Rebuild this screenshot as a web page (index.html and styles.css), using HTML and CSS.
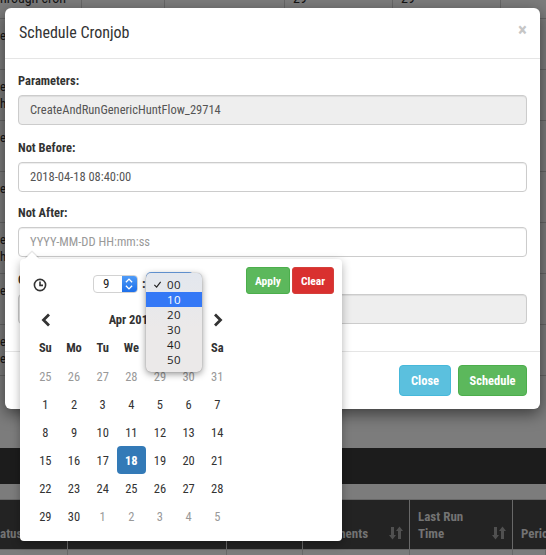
FILE: index.html
```html
<!DOCTYPE html>
<html lang="en">
<head>
<meta charset="utf-8">
<title>Schedule Cronjob</title>
<link rel="stylesheet" href="styles.css">
</head>
<body>
<div class="page">
  <div class="bg-rows">
    <div class="bg-row first"><span class="c c1"><span class="shift">hrough cron</span></span><span class="c c2"></span><span class="c c3"></span><span class="c c4"><span class="shift">29</span></span><span class="c c5"><span class="shift">29</span></span><span class="c c6"></span></div>
    <div class="bg-row"><span class="c c1">e</span><span class="c c2"></span><span class="c c3"></span><span class="c c4"></span><span class="c c5"></span><span class="c c6"></span></div>
    <div class="bg-row"><span class="c c1">e<br>h</span><span class="c c2"></span><span class="c c3"></span><span class="c c4"></span><span class="c c5"></span><span class="c c6"></span></div>
    <div class="bg-row"><span class="c c1">e</span><span class="c c2"></span><span class="c c3"></span><span class="c c4"></span><span class="c c5"></span><span class="c c6"></span></div>
    <div class="bg-row"><span class="c c1">e</span><span class="c c2"></span><span class="c c3"></span><span class="c c4"></span><span class="c c5"></span><span class="c c6"></span></div>
    <div class="bg-row"><span class="c c1">e<br>h</span><span class="c c2"></span><span class="c c3"></span><span class="c c4"></span><span class="c c5"></span><span class="c c6"></span></div>
    <div class="bg-row"><span class="c c1">e</span><span class="c c2"></span><span class="c c3"></span><span class="c c4"></span><span class="c c5"></span><span class="c c6"></span></div>
    <div class="bg-row"><span class="c c1">e<br>e</span><span class="c c2"></span><span class="c c3"></span><span class="c c4"></span><span class="c c5"></span><span class="c c6"></span></div>
  </div>
  <div class="dark-band"></div>
  <div class="table-head">
    <div class="th th1"><span>atus</span></div>
    <div class="th th2"></div>
    <div class="th th3"></div>
    <div class="th th4"><span class="th-label">Arguments</span><svg class="sort" viewBox="0 0 14 14"><path d="M2 1h3v8h2l-3.5 4.5L0 9h2z M9 13V5H7l3.5-4.5L14 5h-2v8z"/></svg></div>
    <div class="th th5"><span class="th-label">Last Run<br>Time</span><svg class="sort" viewBox="0 0 14 14"><path d="M2 1h3v8h2l-3.5 4.5L0 9h2z M9 13V5H7l3.5-4.5L14 5h-2v8z"/></svg></div>
    <div class="th th6"><span>Period</span></div>
  </div>
  <div class="foot-row"><i></i><i></i><i></i><i></i><i></i><i></i></div>

  <div class="modal">
    <header class="modal-head">
      <h4>Schedule Cronjob</h4>
      <span class="close-x">×</span>
    </header>
    <div class="modal-body">
      <div class="group tall"><label>Parameters:</label><div class="input disabled">CreateAndRunGenericHuntFlow_29714</div></div>
      <div class="group short"><label>Not Before:</label><div class="input">2018-04-18 08:40:00</div></div>
      <div class="group tall"><label>Not After:</label><div class="input placeholder">YYYY-MM-DD HH:mm:ss</div></div>
      <div class="group"><label>Comment:</label><div class="input disabled"></div></div>
    </div>
    <footer class="modal-foot">
      <button class="btn info">Close</button>
      <button class="btn success">Schedule</button>
    </footer>
  </div>

  <div class="picker">
    <div class="picker-top">
      <svg class="clock" viewBox="0 0 14 14"><circle cx="7" cy="7" r="5.6"/><path d="M7 3.4V7.4H10"/></svg>
      <div class="hour"><span class="hour-val">9</span><span class="stepper"><svg viewBox="0 0 14 18"><path d="M3.5 7L7 3.5 10.5 7M3.5 11L7 14.5 10.5 11"/></svg></span></div>
      <span class="colon">:</span>
      <div class="actions">
        <button class="btn-sm success">Apply</button>
        <button class="btn-sm danger">Clear</button>
      </div>
    </div>
    <div class="month-row">
      <svg class="chev" viewBox="0 0 12 14"><path d="M9 1.5L3.5 7 9 12.5"/></svg>
      <span class="month">Apr 2018</span>
      <svg class="chev" viewBox="0 0 12 14"><path d="M3 1.5L8.5 7 3 12.5"/></svg>
    </div>
    <div class="cal">
      <b>Su</b><b>Mo</b><b>Tu</b><b>We</b><b>Th</b><b>Fr</b><b>Sa</b>
      <span class="o">25</span><span class="o">26</span><span class="o">27</span><span class="o">28</span><span class="o">29</span><span class="o">30</span><span class="o">31</span>
      <span>1</span><span>2</span><span>3</span><span>4</span><span>5</span><span>6</span><span>7</span>
      <span>8</span><span>9</span><span>10</span><span>11</span><span>12</span><span>13</span><span>14</span>
      <span>15</span><span>16</span><span>17</span><span class="sel">18</span><span>19</span><span>20</span><span>21</span>
      <span>22</span><span>23</span><span>24</span><span>25</span><span>26</span><span>27</span><span>28</span>
      <span>29</span><span>30</span><span class="o">1</span><span class="o">2</span><span class="o">3</span><span class="o">4</span><span class="o">5</span>
    </div>
    <ul class="menu">
      <li class="checked"><svg class="tick" viewBox="0 0 10 10"><path d="M1.5 5.5L4 8 8.5 2"/></svg>00</li>
      <li class="active">10</li>
      <li>20</li>
      <li>30</li>
      <li>40</li>
      <li>50</li>
    </ul>
  </div>
</div>
</body>
</html>
```
FILE: styles.css
```css
* { box-sizing: border-box; }
html, body { margin: 0; padding: 0; }
body { width: 546px; height: 555px; overflow: hidden; font-family: Roboto, "Liberation Sans", sans-serif; font-stretch: 87%; }
.page { position: relative; width: 546px; height: 555px; overflow: hidden; background: #7c7c7c; color: #1a1a1a; }

.bg-rows { height: 448px; background: #7c7c7c; overflow: hidden; }
.bg-row { display: grid; grid-template-columns: 82px 83px 120px 108px 108px 45px; height: 51px; border-bottom: 1px solid #656565; }
.bg-row.first { height: 19px; }
.c { border-right: 1px solid #676767; font-size: 13px; line-height: 17px; color: #141414; padding-top: 8px; height: 100%; overflow: hidden; }
.first .c { padding-top: 0; }
.shift { display: block; margin-top: -10px; white-space: nowrap; font-size: 14px; }
.first .c4, .first .c5 { padding-left: 8px; }
.c6 { border-right: 0; }

.dark-band { height: 36px; background: #1c1c1c; }
.table-head { display: grid; grid-template-columns: 68px 159px 76px 107px 103px 33px; height: 51px; margin-top: 15px; background: #232323; border-top: 1px solid #686868; border-bottom: 1px solid #686868; color: #737373; font-size: 13px; font-weight: 700; }
.th { border-right: 1px solid #686868; display: flex; align-items: flex-end; padding: 0 6px 7px 8px; line-height: 17px; white-space: nowrap; overflow: hidden; }
.th1 { padding-left: 0; }
.th6 { border-right: 0; }
.th-label { flex: 1; }
.sort { width: 14px; height: 14px; fill: #505050; margin-bottom: 2px; flex: none; }
.foot-row { display: grid; grid-template-columns: 68px 159px 76px 107px 103px 33px; height: 5px; }
.foot-row i { border-right: 1px solid #686868; }

.modal { position: absolute; left: 5px; top: 8px; width: 535px; height: 401px; background: #fff; border-radius: 6px; box-shadow: 0 5px 15px rgba(0,0,0,.5); display: flex; flex-direction: column; }
.modal-head { height: 51px; border-bottom: 1px solid #e5e5e5; display: flex; align-items: center; justify-content: space-between; padding: 0 13px 1px 14px; }
.modal-head h4 { margin: 0; font-size: 16px; font-weight: 400; color: #333; }
.close-x { font-size: 19px; font-weight: 700; color: #c6c6c6; line-height: 1; margin-top: -6px; }
.modal-body { height: 292px; padding: 13px 13px 0; }
.group { display: flex; flex-direction: column; height: 66px; }
.group.tall { height: 67px; }
.group.short { height: 65px; }
.group label { font-size: 12.5px; font-weight: 700; color: #333; line-height: 17px; margin-bottom: 6px; }
.input { height: 30px; border: 1px solid #ccc; border-radius: 4px; padding: 0 11px; font-size: 12.5px; line-height: 28px; color: #555; background: #fff; box-shadow: inset 0 1px 1px rgba(0,0,0,.075); flex: none; }
.input.disabled { background: #eee; }
.input.placeholder { color: #999; }
.modal-foot { flex: 1; border-top: 1px solid #e5e5e5; display: flex; justify-content: flex-end; gap: 7px; padding: 13px 13px 0 0; }
.btn { height: 31px; border-radius: 4px; border: 1px solid; color: #fff; font: 700 12.5px Roboto, "Liberation Sans", sans-serif; font-stretch: 87%; padding: 0; }
.btn.info { width: 52px; background: #5bc0de; border-color: #46b8da; }
.btn.success { width: 69px; background: #5cb85c; border-color: #4cae4c; }

.picker { position: absolute; z-index: 1; left: 20px; top: 259px; width: 322px; height: 282px; background: #fff; border-radius: 4px; box-shadow: 0 3px 10px rgba(0,0,0,.3); padding: 0 7px; }
.picker::before { content: ""; position: absolute; left: 7px; top: -5px; width: 10px; height: 10px; background: #fff; transform: rotate(45deg); box-shadow: -1px -1px 1px rgba(0,0,0,.12); }
.picker-top { position: relative; height: 47px; display: flex; align-items: flex-start; padding-top: 16px; }
.clock { width: 14px; height: 14px; margin-left: 6px; margin-top: 3px; fill: none; stroke: #333; stroke-width: 1.6; flex: none; }
.hour { margin-left: 46px; width: 45px; height: 18px; display: flex; border: 1px solid #d2d2d2; border-radius: 4px; background: #fff; font-size: 13px; line-height: 16px; color: #222; overflow: hidden; }
.hour-val { flex: 1; padding-left: 9px; }
.stepper { width: 15px; background: linear-gradient(#4f9bf7, #1d6fea); display: block; flex: none; }
.stepper svg { display: block; width: 14px; height: 16px; fill: none; stroke: #fff; stroke-width: 1.5; }
.colon { margin-left: 4px; font-size: 13px; font-weight: 700; line-height: 18px; color: #333; }
.actions { position: absolute; right: 1px; top: 8px; display: flex; gap: 2px; }
.btn-sm { height: 27px; border-radius: 3px; border: 1px solid; color: #fff; font: 700 11.5px Roboto, "Liberation Sans", sans-serif; font-stretch: 87%; padding: 0; }
.btn-sm.success { width: 44px; background: #5cb85c; border-color: #4cae4c; }
.btn-sm.danger { width: 42px; background: #d9302f; border-color: #d43f3a; }
.month-row { height: 27px; display: grid; grid-template-columns: 29px 1fr 29px; width: 201px; align-items: center; justify-items: center; margin-left: 4px; }
.month { font-size: 12.5px; font-weight: 700; color: #333; }
.chev { width: 12px; height: 14px; fill: none; stroke: #333; stroke-width: 2.8; }
.cal { display: grid; grid-template-columns: repeat(7, 28.67px); grid-template-rows: 29px repeat(6, 28px); width: 201px; margin-left: 4px; font-size: 12.5px; color: #333; align-items: center; justify-items: center; }
.cal b { font-weight: 700; }
.cal span { width: 28.67px; height: 28px; display: flex; align-items: center; justify-content: center; }
.cal .o { color: #999; }
.cal .sel { background: #337ab7; color: #fff; font-weight: 700; border-radius: 4px; }
.menu { position: absolute; left: 126px; top: 14px; width: 56px; margin: 0; padding: 4px 0 5px; list-style: none; background: #ebe9e9; background-image: linear-gradient(#e3e7ee, #ebe9e9 55%); border-radius: 5px; box-shadow: 0 2px 7px rgba(0,0,0,.42), 0 0 1px rgba(0,0,0,.35); font: 500 11.5px "Open Sans", "Liberation Sans", sans-serif; color: #1c1c1c; }
.menu::before { content: ""; position: absolute; left: 0; top: -1px; width: 46px; height: 12px; border: 1px solid #6ea6ee; border-bottom: 0; border-radius: 5px 5px 0 0; z-index: -1; }
.menu li { position: relative; height: 15px; line-height: 15px; padding-left: 21px; letter-spacing: .4px; }
.menu .active { background: #3478f6; color: #fff; }
.tick { position: absolute; left: 7px; top: 3px; width: 9px; height: 9px; fill: none; stroke: #222; stroke-width: 1.3; }
```
